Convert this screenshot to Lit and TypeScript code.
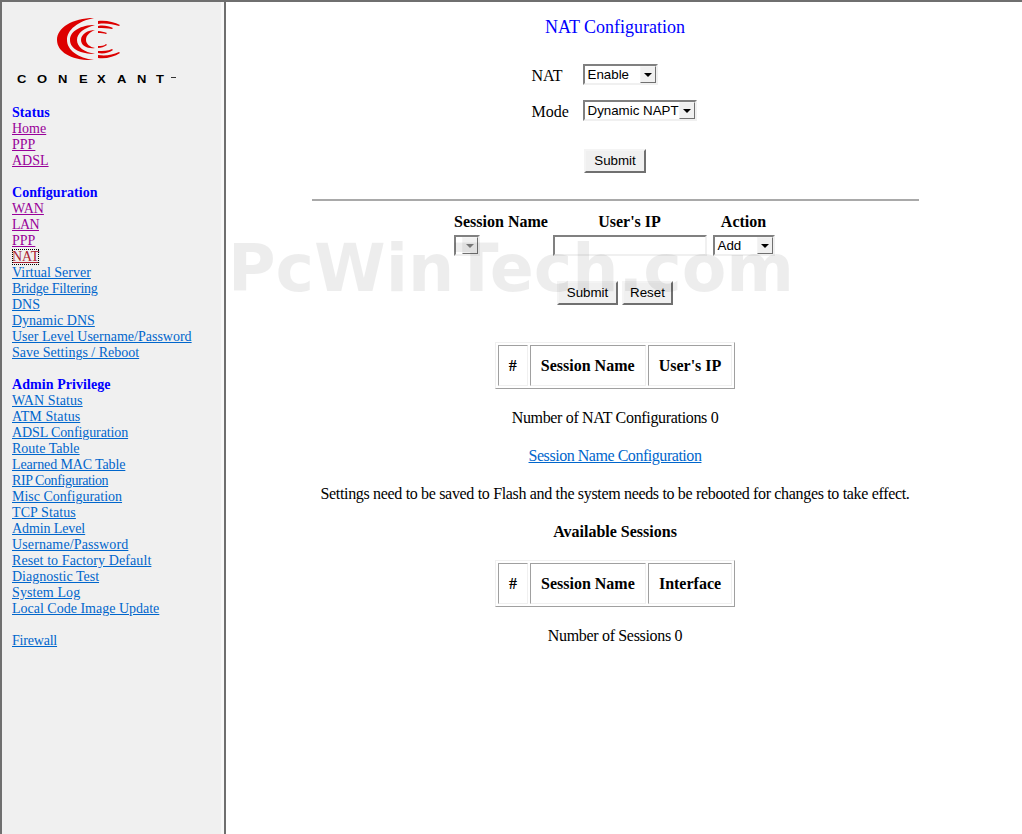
import { LitElement, html, css } from "lit";
import { customElement } from "lit/decorators.js";
import { styleMap } from "lit/directives/style-map.js";

const groups = [
  { title: "Status", items: [["Home", 1], ["PPP", 1], ["ADSL", 1]] },
  { title: "Configuration", items: [["WAN", 1], ["LAN", 1, -0.6], ["PPP", 1], ["NAT", 2], ["Virtual Server", 0], ["Bridge Filtering", 0, -0.27], ["DNS", 0], ["Dynamic DNS", 0], ["User Level Username/Password", 0], ["Save Settings / Reboot", 0]] },
  { title: "Admin Privilege", items: [["WAN Status", 0, 0.1], ["ATM Status", 0, 0.1], ["ADSL Configuration", 0, -0.11], ["Route Table", 0], ["Learned MAC Table", 0, -0.12], ["RIP Configuration", 0, -0.42], ["Misc Configuration", 0], ["TCP Status", 0, 0.1], ["Admin Level", 0, -0.1], ["Username/Password", 0, 0.12], ["Reset to Factory Default", 0, 0.09], ["Diagnostic Test", 0], ["System Log", 0, 0.1], ["Local Code Image Update", 0]] },
  { title: "", items: [["Firewall", 0, -0.2]] },
] as { title: string; items: [string, number, number?][] }[];

@customElement("app-root")
export class AppRoot extends LitElement {
  static styles = css`
    :host { display: block; height: 100vh; overflow: hidden; font-family: "Liberation Serif", serif; color: #000; background: #fff; }
    * { box-sizing: border-box; }
    .frames { height: 100%; display: grid; grid-template-columns: 224px 1fr; border-top: 2px solid #6f6f6f; border-left: 2px solid #6f6f6f; position: relative; }
    .side { background: #f0f0f0; border-right: 2px solid #6f6f6f; box-shadow: inset -3px 0 0 #f8f8f8; padding: 0 0 0 10px; font-size: 14px; line-height: 16px; }
    .logo { display: block; margin: 14px 0 0 4px; }
    .group { margin-bottom: 16px; }
    .group.first { margin-top: 17px; }
    .group h4 { margin: 0; font-size: 14px; line-height: 16px; font-weight: bold; color: #0000ff; letter-spacing: 0.07px; }
    .side a { display: table; color: #0066cc; text-decoration: underline; }
    .side a.v { color: #990099; }
    .side a.f { color: #aa2233; outline: 1px dotted #000; outline-offset: -1px; }
    .main { padding-right: 18px; display: flex; flex-direction: column; align-items: center; font-size: 16px; line-height: 18px; }
    .n { letter-spacing: -0.33px; }
    .title { margin-top: 14px; color: #0000ff; font-size: 18px; line-height: 22px; }
    .row { display: grid; grid-template-columns: 51px auto; align-items: center; width: 165px; margin-right: 2px; }
    .row > span { padding-top: 2px; }
    .row.nat { margin-top: 26px; }
    .row.mode { margin-top: 15px; }
    .sel { display: flex; height: 21px; align-items: stretch; background: #fff; border: 2px solid; border-color: #808080 #f0f0f0 #f0f0f0 #808080; font: 13.33px/18px "Liberation Sans", sans-serif; }
    .sel span { flex: 1; padding-left: 3px; white-space: nowrap; }
    .sel i { width: 16px; background: #f0f0f0; border: 1px solid; border-color: #f4f4f4 #707070 #707070 #f4f4f4; display: flex; align-items: center; justify-content: center; }
    .sel i::after { content: ""; border-style: solid; border-width: 4px 4px 0; border-color: #000 transparent transparent; }
    .sel.dis i::after { border-top-color: #808080; }
    .dis { width: 26px; }
    .w1 { width: 75px; } .w2 { width: 114px; } .w3 { width: 62px; }
    button { font: 13.33px/16px "Liberation Sans", sans-serif; color: #000; background: #f0f0f0; height: 24px; padding: 0; border: 2px solid; border-color: #f4f4f4 #707070 #707070 #f4f4f4; }
    .b1 { width: 61px; }
    .b2 { width: 51px; }
    .sub1 { width: 62px; margin-top: 28px; }
    hr { width: 607px; margin: 26px 0 0; height: 2px; border: 0; background: #a9a9a9; }
    .form { margin: 12px 2px 0 0; display: grid; grid-template-columns: 95px 156px 62px; column-gap: 4px; justify-content: center; }
    .form b { text-align: center; display: block; line-height: 18px; }
    .form b.ip { width: 154px; }
    .form .sel, .form input { margin-top: 4px; }
    input { height: 21px; width: 154px; border: 2px solid; border-color: #808080 #f0f0f0 #f0f0f0 #808080; background: #fff; padding: 0; }
    .btns { margin-top: 25px; display: flex; gap: 4px; }
    table { border-collapse: separate; border-spacing: 2px; border: 1px solid; border-color: #f0f0f0 #a0a0a0 #a0a0a0 #f0f0f0; font-size: 16px; line-height: 19px; }
    th { padding: 10px; border: 1px solid; border-color: #a0a0a0 #f0f0f0 #f0f0f0 #a0a0a0; font-weight: bold; }
    th.s { width: 116px; }
    .t1 { margin-top: 37px; }
    .p1, .p2, .p3, .p4, .p5 { margin-top: 20px; }
    .p2 a { color: #0066cc; letter-spacing: -0.46px; }
    .p4 { font-weight: bold; }
    .t2 { margin-top: 19px; }
    .wm { position: absolute; left: 226px; top: 231px; font: bold 65px/72px "DejaVu Sans", sans-serif; letter-spacing: -0.05px; color: rgba(0,0,0,.07); pointer-events: none; white-space: nowrap; }
  `;

  render() {
    return html`<div class="frames">
      <nav class="side">
        <svg class="logo" width="172" height="72" viewBox="16 16 172 72">
          <g fill="#dd0000">
            <path d="M94 18C72 18 57 28 57 40C57 52 72 61 94 60C78 58 67 50 67 40C67 30 78 21 94 18Z"/>
            <path d="M95 25C81 25 70 31 70 40C70 49 81 54 95 54C84 52 77 47 77 40C77 33 84 28 95 25Z"/>
            <path d="M95 30C88 30 81 34 81 40C81 46 88 49 95 48C90 47 86 44 86 40C86 35 90 32 95 30Z"/>
            <path d="M98 21C106 20 114 22 120 25L119 26C112 24 106 23 98 24Z"/>
            <path d="M98 58C106 59 114 57 120 53L119 52C112 55 106 56 98 55Z"/>
            <path d="M98 26C103 25 109 26 113 28L112 29C108 28 103 28 98 28Z"/>
            <path d="M98 53C103 54 109 53 113 50L112 49C108 51 103 51 98 51Z"/>
            <path d="M98 31C101 31 104 32 107 33L106 34C104 33 101 33 98 33Z"/>
            <path d="M98 48C101 48 104 47 107 45L106 44C104 46 101 46 98 46Z"/>
          </g>
          <g transform="scale(1.3 1)">
            <text x="13.1 28.5 44.6 60.8 74.6 90 105.4 120" y="83" font-family="Liberation Sans, sans-serif" font-size="10" font-weight="bold" fill="#000">CONEXANT</text>
          </g>
          <path d="M171 77.5h5" stroke="#333" stroke-width="1"/>
        </svg>
        ${groups.map((g, i) => html`<div class="group ${i === 0 ? "first" : ""}">
          ${g.title ? html`<h4>${g.title}</h4>` : ""}
          ${g.items.map(([t, k, ls]) => html`<a class=${k === 1 ? "v" : k === 2 ? "f" : ""} style=${styleMap(ls ? { letterSpacing: ls + "px" } : {})} href="#">${t}</a>`)}
        </div>`)}
      </nav>
      <main class="main">
        <div class="title">NAT Configuration</div>
        <div class="row nat"><span>NAT</span><div class="sel w1"><span>Enable</span><i></i></div></div>
        <div class="row mode"><span>Mode</span><div class="sel w2"><span>Dynamic NAPT</span><i></i></div></div>
        <button class="sub1">Submit</button>
        <hr />
        <div class="form">
          <b>Session Name</b><b class="ip">User's IP</b><b>Action</b>
          <div class="sel dis"><span></span><i></i></div>
          <input />
          <div class="sel w3"><span>Add</span><i></i></div>
        </div>
        <div class="btns"><button class="b1">Submit</button><button class="b2">Reset</button></div>
        <table class="t1"><tr><th>#</th><th class="s">Session Name</th><th>User's IP</th></tr></table>
        <div class="p1 n">Number of NAT Configurations 0</div>
        <div class="p2"><a href="#">Session Name Configuration</a></div>
        <div class="p3 n">Settings need to be saved to Flash and the system needs to be rebooted for changes to take effect.</div>
        <div class="p4">Available Sessions</div>
        <table class="t2"><tr><th>#</th><th class="s">Session Name</th><th>Interface</th></tr></table>
        <div class="p5 n">Number of Sessions 0</div>
      </main>
      <div class="wm">PcWinTech.com</div>
    </div>`;
  }
}
